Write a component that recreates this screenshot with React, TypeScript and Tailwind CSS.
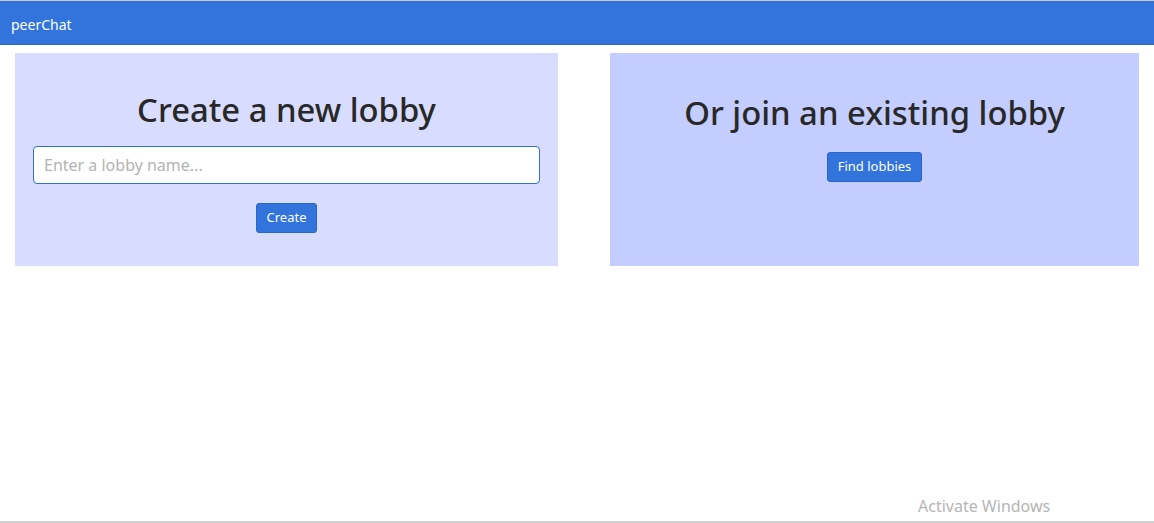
import React from "react";

export default function App() {
  const font = { fontFamily: '"Noto Sans", "Open Sans", sans-serif' };
  return (
    <div className="relative h-[523px] w-[1154px] overflow-hidden bg-white" style={font}>
      <div className="h-px bg-[#c8c8c8]" />
      <nav className="flex h-[44px] items-center border-b border-[#2a66cc] bg-[#3273dc] px-[11px] pt-[3px]">
        <span className="text-[14px] text-white">peerChat</span>
      </nav>
      <div className="flex gap-[52px] pl-[15px] pr-[15px] pt-[8px]">
        <section className="flex h-[213px] w-[543px] flex-col items-center bg-[#d8ddff] px-[18px] pt-[33px]">
          <h1 className="text-[32.8px] font-medium leading-[48px] text-[#282828]">Create a new lobby</h1>
          <input
            className="mt-[12px] h-[38px] w-full rounded-[4px] border border-[#2f6fd8] bg-white px-[10px] text-[16px] placeholder:text-[#b3b3b3] outline-none"
            placeholder="Enter a lobby name..."
          />
          <button className="mt-[19px] h-[30px] rounded-[3px] border border-[#2a66cc] bg-[#3273dc] px-[10px] text-[13px] text-white">
            Create
          </button>
        </section>
        <section className="flex h-[213px] w-[529px] flex-col items-center bg-[#c4cdff] pt-[36px]">
          <h1 className="text-[32.8px] font-medium leading-[48px] text-[#282828]">Or join an existing lobby</h1>
          <button className="mt-[15px] h-[30px] rounded-[3px] border border-[#2a66cc] bg-[#3273dc] px-[10px] text-[13px] text-white">
            Find lobbies
          </button>
        </section>
      </div>
      <div className="absolute bottom-[5px] left-[918px] text-[16px] text-[#b5b5b5]">Activate Windows</div>
      <div className="absolute bottom-0 left-0 h-[2px] w-full bg-[#d0d0d0]" />
    </div>
  );
}
